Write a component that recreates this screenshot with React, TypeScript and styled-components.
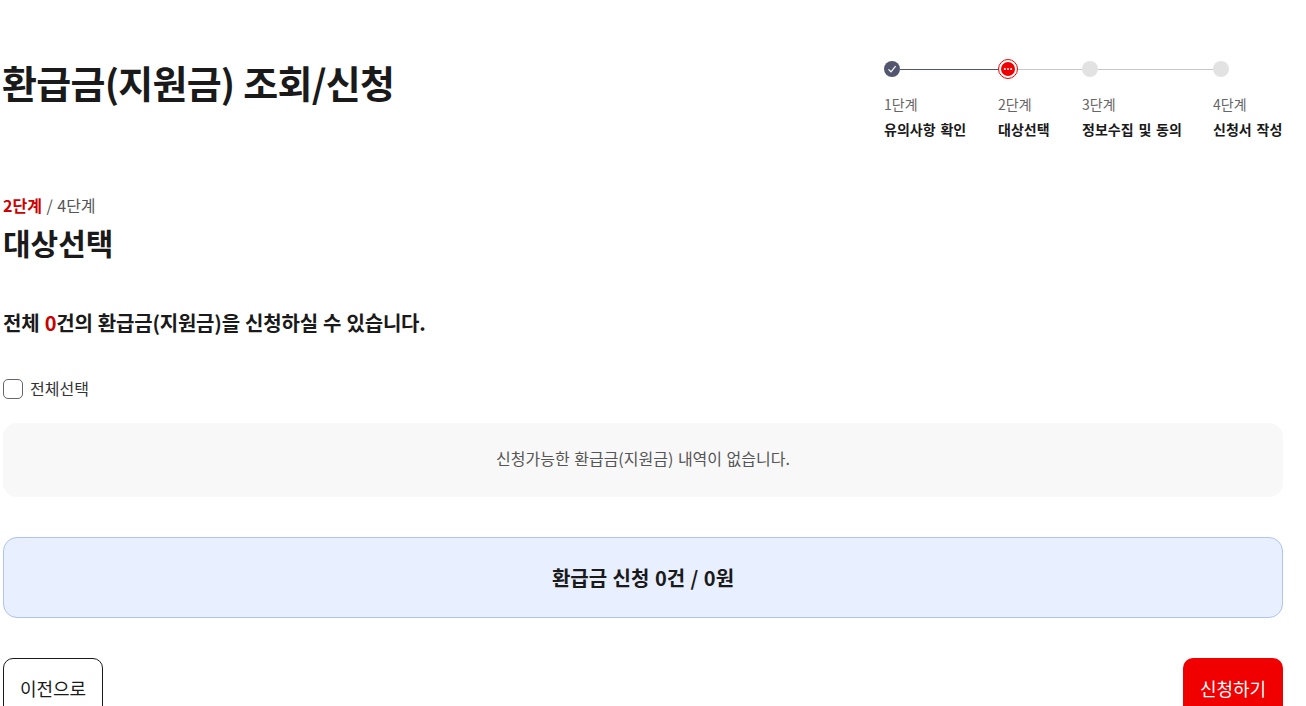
import styled, { createGlobalStyle } from 'styled-components';

const GlobalStyle = createGlobalStyle`
  html, body {
    margin: 0;
    height: 706px;
    overflow: hidden;
    background: #fff;
  }
  body {
    font-family: "Noto Sans CJK KR", "Noto Sans", sans-serif;
    color: #1a1a1a;
    word-spacing: 0.06em;
  }
  * { box-sizing: border-box; }
`;

const steps = [
    { no: '1단계', name: '유의사항 확인', state: 'done', width: 114 },
    { no: '2단계', name: '대상선택', state: 'active', width: 84 },
    { no: '3단계', name: '정보수집 및 동의', state: 'todo', width: 131 },
    { no: '4단계', name: '신청서 작성', state: 'last', width: 70 },
];

const App = () => {
    return (
        <Page>
            <GlobalStyle />
            <Header>
                <Title>환급금(지원금) 조회/신청</Title>
                <Stepper>
                    {steps.map(step => (
                        <Step key={step.no} style={{ width: step.width }}>
                            <Track>
                                {step.state === 'done' && (
                                    <DoneDot>
                                        <svg width="10" height="10" viewBox="0 0 10 10" fill="none">
                                            <path d="M1.5 5.4 L4 7.8 L8.6 2.2" stroke="#fff" strokeWidth="1.2" />
                                        </svg>
                                    </DoneDot>
                                )}
                                {step.state === 'active' && (
                                    <ActiveDot>
                                        <ActiveCore>
                                            <svg width="10" height="4" viewBox="0 0 10 4" fill="#fff">
                                                <circle cx="1.8" cy="2" r="1" />
                                                <circle cx="5" cy="2" r="1" />
                                                <circle cx="8.2" cy="2" r="1" />
                                            </svg>
                                        </ActiveCore>
                                    </ActiveDot>
                                )}
                                {(step.state === 'todo' || step.state === 'last') && <TodoDot />}
                                {step.state !== 'last' && <Line $done={step.state === 'done'} />}
                            </Track>
                            <StepNo>{step.no}</StepNo>
                            <StepName>{step.name}</StepName>
                        </Step>
                    ))}
                </Stepper>
            </Header>

            <Progress><strong>2단계</strong> / 4단계</Progress>
            <SubTitle>대상선택</SubTitle>
            <Summary>전체 <em>0</em>건의 환급금(지원금)을 신청하실 수 있습니다.</Summary>

            <CheckRow>
                <CheckBox type="checkbox" />
                <CheckText>전체선택</CheckText>
            </CheckRow>

            <EmptyBox>신청가능한 환급금(지원금) 내역이 없습니다.</EmptyBox>
            <TotalBox>환급금 신청 0건 / 0원</TotalBox>

            <Buttons>
                <PrevButton>이전으로</PrevButton>
                <ApplyButton>신청하기</ApplyButton>
            </Buttons>
        </Page>
    );
};

const Page = styled.div`
  width: 1280px;
  margin-left: 3px;
`;

const Header = styled.div`
  display: flex;
  justify-content: space-between;
  align-items: flex-start;
  padding-top: 59px;
  height: 195px;
`;

const Title = styled.h1`
  margin: 0 0 0 -1px;
  font-size: 38px;
  line-height: 46px;
  font-weight: 700;
  letter-spacing: -0.75px;
  color: #1a1a1a;
`;

const Stepper = styled.div`
  display: flex;
  width: 399px;
  margin-top: 2px;
`;

const Step = styled.div`
  flex: none;
  white-space: nowrap;
`;

const Track = styled.div`
  display: flex;
  align-items: center;
  height: 20px;
  margin-top: -2px;
`;

const DoneDot = styled.span`
  flex: none;
  width: 16px;
  height: 16px;
  border-radius: 50%;
  background: #53566f;
  display: flex;
  align-items: center;
  justify-content: center;
`;

const ActiveDot = styled.span`
  flex: none;
  width: 20px;
  height: 20px;
  border-radius: 50%;
  border: 1px solid #f00000;
  background: #fff;
  display: flex;
  align-items: center;
  justify-content: center;
`;

const ActiveCore = styled.span`
  width: 14px;
  height: 14px;
  border-radius: 50%;
  background: #f00000;
  display: flex;
  align-items: center;
  justify-content: center;
`;

const TodoDot = styled.span`
  flex: none;
  width: 16px;
  height: 16px;
  border-radius: 50%;
  background: #e2e2e2;
`;

const Line = styled.span<{ $done: boolean }>`
  flex: 1;
  height: 1px;
  background: ${props => (props.$done ? '#53566f' : '#c8c8c8')};
`;

const StepNo = styled.div`
  margin-top: 15px;
  font-size: 14px;
  line-height: 20px;
  color: #666;
`;

const StepName = styled.div`
  margin-top: 5px;
  font-size: 14px;
  line-height: 20px;
  font-weight: 700;
  word-spacing: 0.12em;
  color: #1a1a1a;
`;

const Progress = styled.div`
  font-size: 16px;
  line-height: 20px;
  color: #555;

  strong {
    color: #cc0000;
    font-weight: 700;
  }
`;

const SubTitle = styled.h2`
  margin: 9px 0 0;
  font-size: 30px;
  line-height: 36px;
  font-weight: 700;
  color: #1a1a1a;
`;

const Summary = styled.p`
  margin: 49px 0 0;
  font-size: 20px;
  line-height: 28px;
  font-weight: 700;
  letter-spacing: -0.22px;
  color: #1a1a1a;

  em {
    font-style: normal;
    color: #cc0000;
  }
`;

const CheckRow = styled.label`
  display: flex;
  align-items: center;
  gap: 7px;
  margin-top: 42px;
  height: 20px;
  font-size: 16px;
  color: #333;
`;

const CheckText = styled.span`
  margin-top: -2px;
`;

const CheckBox = styled.input`
  appearance: none;
  flex: none;
  width: 20px;
  height: 20px;
  margin: 0;
  border: 1px solid #666;
  border-radius: 5px;
  background: #fff;
`;

const EmptyBox = styled.div`
  display: flex;
  align-items: center;
  justify-content: center;
  height: 74px;
  margin-top: 24px;
  padding-bottom: 5px;
  border-radius: 14px;
  background: #f8f8f8;
  font-size: 16px;
  color: #555;
`;

const TotalBox = styled.div`
  display: flex;
  align-items: center;
  justify-content: center;
  height: 81px;
  margin-top: 40px;
  border: 1px solid #adc4f5;
  border-radius: 14px;
  background: #e8effe;
  font-size: 20px;
  font-weight: 700;
  color: #1a1a1a;
`;

const Buttons = styled.div`
  display: flex;
  justify-content: space-between;
  margin-top: 40px;
`;

const PrevButton = styled.button`
  width: 100px;
  height: 60px;
  border: 1px solid #1a1a1a;
  border-radius: 10px;
  background: #fff;
  font-family: inherit;
  font-size: 18px;
  color: #1a1a1a;
`;

const ApplyButton = styled.button`
  width: 100px;
  height: 60px;
  border: 0;
  border-radius: 10px;
  background: #f00000;
  font-family: inherit;
  font-size: 18px;
  color: #fff;
`;

export default App;
